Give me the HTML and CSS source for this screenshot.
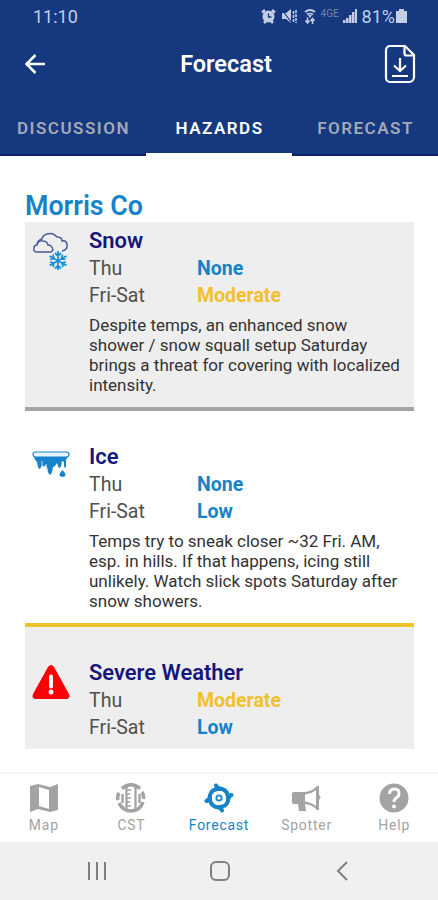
FILE: index.html
```html
<!DOCTYPE html>
<html lang="en">
<head>
  <meta charset="UTF-8">
  <meta name="viewport" content="width=device-width, initial-scale=1.0">
  <title>Forecast</title>
  <link rel="stylesheet" href="styles.css">
</head>
<body>
  <!-- Header -->
  <header class="header">
    <div class="status-bar">
      <span class="clock">11:10</span>
      <div class="status-icons">
        <svg class="alarm" width="15" height="15" viewBox="0 0 15 15"><path d="M1 3.500 4 1M14 3.500 11 1M3 14l2-2M12 14l-2-2" stroke="currentColor" stroke-width="2.500"/><circle cx="7.500" cy="7.500" r="6" fill="currentColor"/><path d="M7.500 4.500v3.500h3" fill="none" stroke="#15387f" stroke-width="1.300"/></svg>
        <svg class="mute" width="16" height="15" viewBox="0 0 16 15"><path d="M1 4h4l5-4v14l-5-4H1z" fill="currentColor"/><path d="m1 1 10 13" stroke="#15387f" stroke-width="1.200"/><path d="M12.500 2v11M15 1v13" stroke="currentColor" stroke-width="1.600" stroke-dasharray="3 1"/></svg>
        <svg class="wifi" width="12" height="15" viewBox="0 0 12 15"><path d="M1 3q5-4 10 0M3 5.500q3-2 6 0" fill="none" stroke="currentColor" stroke-width="1.700"/><path d="m4 6 2 3 2-3z" fill="currentColor"/><path d="M3.500 8.500V14M1.500 11.500l2 2.500 2-2.500M8.500 15V9.500M6.500 12l2-2.500 2 2.500" fill="none" stroke="currentColor" stroke-width="1.500"/></svg>
        <span class="carrier">4GE</span>
        <svg class="signal" width="14" height="14" viewBox="0 0 14 14"><path d="M0 14v-3h2.500v3zM3 14V9h2.500v5zM6 14V6h2.500v8zM9 14V3h2.500v11zM12 14V0h2v14z" fill="currentColor"/></svg>
        <span class="battery-level">81%</span>
        <svg class="battery" width="11" height="14" viewBox="0 0 11 14"><path d="M3 0h5v2h3v12H0V2h3z" fill="currentColor"/></svg>
      </div>
    </div>
    <div class="title-bar">
      <svg width="20" height="20" viewBox="0 0 20 20" fill="none" stroke="currentColor" stroke-width="2.500"><path d="M20 10H2M10.500 1 1.500 10l9 9"/></svg>
      <h1>Forecast</h1>
      <svg width="32" height="40" viewBox="0 0 32 40" fill="none" stroke="currentColor" stroke-width="2.200"><path d="M6 2h15l9 9v22a5 5 0 0 1-5 5H6a4 4 0 0 1-4-4V6a4 4 0 0 1 4-4z"/><path d="M20.500 2v7.500a2 2 0 0 0 2 2H30M16 14v13M10 21.500l6 5.500 6-5.500M8 32h16"/></svg>
    </div>
    <nav class="tabs">
      <a class="tab">DISCUSSION</a>
      <a class="tab active">HAZARDS</a>
      <a class="tab">FORECAST</a>
    </nav>
  </header>

  <!-- Hazards -->
  <main class="content">
    <h2>Morris Co</h2>

    <section class="hazard snow">
      <svg width="38" height="40" viewBox="0 0 38 40" fill="none">
        <path d="M30 19q6-1 5-7-1-4-5-3 0-4-5-4Q21 0 15 2q-4 1-5 5-4 1-5 5" stroke="#485c98" stroke-width="1.500"/>
        <path d="M4 20q-3-1-2-4 0-3 3-3 1-5 6-4 4 0 5 4 4 0 5 5l-2 2z" stroke="#485c98" stroke-width="1.500"/>
        <path d="M26 19v19M17.500 24l17 9.500M17.500 33.500l17-9.500M23 21l3 3 3-3M23 36.500l3-3 3 3M18 27.500l4-1-1-4M34 30l-4 1 1 4M30.500 22.500l-1 4 4 1M21 35l1-4-4-1" stroke="#1990d2" stroke-width="1.800"/>
      </svg>
      <div class="details">
        <h3>Snow</h3>
        <div class="risk"><span>Thu</span><strong>None</strong></div>
        <div class="risk"><span>Fri-Sat</span><strong class="moderate">Moderate</strong></div>
        <p>Despite temps, an enhanced snow<br>shower / snow squall setup Saturday<br>brings a threat for covering with localized<br>intensity.</p>
      </div>
    </section>

    <section class="hazard ice">
      <svg width="38" height="27" viewBox="0 0 38 27">
        <path d="M2 5h34l-2 4v6q-1 4-2 0v-4l-2-1-1 5q-2 4-3 0l-1-3-2 3-2 1-1 5q-2 6-4 0l-1-5-2-2-1 2-2-2-1 2q-1 4-3 0l-1-5-2-2z" fill="#1683cb"/>
        <rect x="1" y="1" width="36" height="5" rx="2.500" fill="#e4f5ff" stroke="#1683cb" stroke-width="1.200"/>
        <path d="m14 13 1 6M10 10v4" stroke="#b8def5"/>
        <path d="M30.500 19q-6 6 0 7 6-1 0-7z" fill="#1683cb"/>
      </svg>
      <div class="details">
        <h3>Ice</h3>
        <div class="risk"><span>Thu</span><strong>None</strong></div>
        <div class="risk"><span>Fri-Sat</span><strong>Low</strong></div>
        <p>Temps try to sneak closer ~32 Fri. AM,<br>esp. in hills. If that happens, icing still<br>unlikely. Watch slick spots Saturday after<br>snow showers.</p>
      </div>
    </section>

    <section class="hazard severe">
      <svg width="38" height="35" viewBox="0 0 38 35"><path d="M16 2q3-4 6 0l15 27q2 5-4 5H5q-6 0-4-5z" fill="#fc0008"/><path d="M19 11.500v10" stroke="#fff" stroke-width="4" stroke-linecap="round"/><circle cx="19" cy="27" r="2.500" fill="#fff"/></svg>
      <div class="details">
        <h3>Severe Weather</h3>
        <div class="risk"><span>Thu</span><strong class="moderate">Moderate</strong></div>
        <div class="risk"><span>Fri-Sat</span><strong>Low</strong></div>
      </div>
    </section>
  </main>

  <!-- App navigation -->
  <nav class="bottom-nav">
    <a class="nav-item">
      <svg width="30" height="30" viewBox="0 0 30 30"><path d="M1 3l8-2 12 3 8-3v26l-8 2-12-3-8 3zM10 4v19l10 3V7z" fill="currentColor" fill-rule="evenodd"/></svg>
      <span>Map</span>
    </a>
    <a class="nav-item">
      <svg width="30" height="30" viewBox="0 0 30 30" fill="none" stroke="currentColor">
        <path d="M6 5.500Q15-2 24 5.500M26 9q2 3 1.500 7M27 19q-3 9-12 9-8 0-12-8M2 17q-1-4 1-7" stroke-width="3.600"/>
        <path d="M10.500 3v24M19.500 3v24" stroke-width="2.200"/>
        <path d="M11 7h4M11 11h3M11 15h4M11 19h3M11 23h4" stroke-width="1.400"/>
        <path d="M6.500 11v9M23.500 11v9" stroke-width="2.400"/>
      </svg>
      <span>CST</span>
    </a>
    <a class="nav-item active">
      <svg width="30" height="30" viewBox="0 0 30 30" fill="none" stroke="currentColor" stroke-width="4" stroke-linecap="round">
        <circle cx="15" cy="15" r="2.600" stroke-width="1.800"/>
        <path d="M12 2.500q1 3 6 3.500 6.500 2 6 10"/>
        <path d="M27.500 12q-3 1-3.500 6-2 6.500-10 6"/>
        <path d="M18 27.500q-1-3-6-3.500-6.500-2-6-10"/>
        <path d="M2.500 18q3-1 3.500-6 2-6.500 10-6"/>
      </svg>
      <span>Forecast</span>
    </a>
    <a class="nav-item">
      <svg width="30" height="30" viewBox="0 0 30 30"><path d="M2 9h11q8-1 12-6h2v9q3 2 0 5v10h-2q-4-5-12-6l1 7H7l-1-7H2q-2 0-2-2v-8q0-2 2-2zm11 2.500v7q7 1 11 4.500V7q-4 3.500-11 4.500z" fill="currentColor" fill-rule="evenodd"/></svg>
      <span>Spotter</span>
    </a>
    <a class="nav-item">
      <svg width="30" height="30" viewBox="0 0 30 30"><circle cx="15" cy="15" r="14.500" fill="currentColor"/><path d="M10.500 11q0-5 5-5t4.500 5c0 4-5 3-5 8" fill="none" stroke="#fff" stroke-width="3"/><circle cx="15" cy="23.500" r="2" fill="#fff"/></svg>
      <span>Help</span>
    </a>
  </nav>

  <!-- System navigation -->
  <footer class="system-nav">
    <svg width="20" height="20" viewBox="0 0 20 20"><path d="M2 1v18M10 1v18M18 1v18"/></svg>
    <svg width="20" height="20" viewBox="0 0 20 20"><rect x="1" y="1" width="18" height="18" rx="5"/></svg>
    <svg width="20" height="20" viewBox="0 0 20 20"><path d="m15 1-9 9 9 9"/></svg>
  </footer>
</body>
</html>
```
FILE: styles.css
```css
* {
  margin: 0;
  padding: 0;
  box-sizing: border-box;
}

body {
  width: 438px;
  height: 900px;
  display: flex;
  flex-direction: column;
  overflow: hidden;
  background: #fff;
  font-family: Roboto, "Liberation Sans", sans-serif;
  color: #505050;
}

svg {
  display: block;
  flex-shrink: 0;
}

/* Header */
.header {
  height: 156px;
  background: #15387f;
  color: #fff;
}

.status-bar {
  height: 32px;
  padding: 0 31px 0 33px;
  display: flex;
  justify-content: space-between;
  align-items: center;
  color: #c3cde6;
  font-size: 18px;
}

.status-icons {
  display: flex;
  align-items: center;
}

.mute {
  margin-left: 5px;
}

.wifi {
  margin-left: 7px;
}

.carrier {
  width: 20px;
  margin-left: 5px;
  padding-bottom: 5px;
  color: #6f84b1;
  font-size: 10px;
  line-height: 10px;
}

.signal {
  margin-left: 2px;
}

.battery-level {
  margin: 0 1px 0 5px;
}

.title-bar {
  height: 64px;
  padding: 0 22px 0 25px;
  display: grid;
  grid-template-columns: 32px 1fr 32px;
  align-items: center;
}

h1 {
  padding-left: 11px;
  text-align: center;
  font-size: 23.500px;
  font-weight: 600;
  line-height: 28px;
}

.tabs {
  height: 60px;
  display: grid;
  grid-template-columns: repeat(3, 1fr);
  border-bottom: 2px solid #07226a;
}

.tab {
  padding: 22px 0 0 1px;
  text-align: center;
  color: #a4a8b7;
  font-size: 17px;
  font-weight: 600;
  line-height: 20px;
  letter-spacing: 1.500px;
}

.tab.active {
  height: 60px;
  color: #fff;
  border-bottom: 3px solid #fff;
}

/* Hazards */
.content {
  flex: 1;
  padding: 34px 24px 0 25px;
}

h2 {
  height: 32px;
  color: #1683c9;
  font-size: 26.800px;
  font-weight: 600;
  line-height: 32px;
}

.hazard {
  display: flex;
  padding: 5px 0 0 7px;
}

.hazard > svg {
  margin-top: 5px;
}

.snow {
  height: 189px;
  background: #eee;
  border-bottom: 4px solid #a5a5a5;
}

.ice {
  height: 212px;
  padding-top: 32px;
}

.ice > svg {
  margin-top: 8px;
}

.severe {
  height: 126px;
  padding-top: 32px;
  background: #eee;
  border-top: 4px solid #edc22f;
}

.severe > svg {
  margin-top: 6px;
}

.details {
  width: 324px;
  margin-left: 19px;
}

h3 {
  height: 29px;
  color: #15177b;
  font-size: 21.900px;
  font-weight: 600;
  line-height: 27px;
}

.risk {
  display: grid;
  grid-template-columns: 108px 1fr;
  font-size: 19.500px;
  line-height: 26.500px;
}

.risk strong {
  color: #1683c9;
  font-weight: 700;
}

.risk .moderate {
  color: #f2c02d;
}

.details p {
  margin-top: 6px;
  color: #333;
  font-size: 17px;
  line-height: 20px;
  white-space: nowrap;
}

/* Bottom navigation */
.bottom-nav {
  height: 70px;
  display: grid;
  grid-template-columns: repeat(5, 1fr);
  border-top: 2px solid #f5f5f5;
}

.nav-item {
  display: flex;
  flex-direction: column;
  align-items: center;
  padding-top: 9px;
  color: #a3a3a3;
  font-size: 13.900px;
  line-height: 18px;
  letter-spacing: 0.800px;
}

.nav-item span {
  margin-top: 3px;
}

.nav-item.active {
  color: #1683c9;
}

.system-nav {
  height: 58px;
  display: flex;
  align-items: center;
  justify-content: space-between;
  padding: 0 86px 0 87px;
  background: #f0f0f0;
}

.system-nav svg {
  fill: none;
  stroke: #808080;
  stroke-width: 2;
}
```
